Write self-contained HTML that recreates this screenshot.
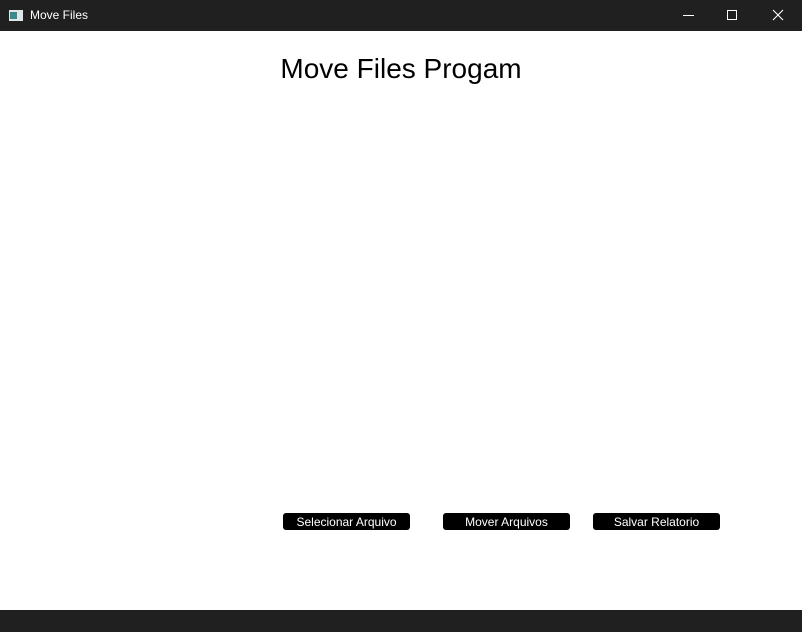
<!DOCTYPE html>
<html><head><style>
html,body{margin:0;padding:0;width:802px;height:632px;overflow:hidden;background:#fff;font-family:"Liberation Sans",sans-serif;}
.tb{position:absolute;left:0;top:0;width:802px;height:31px;background:#202020;}
.tb .t{position:absolute;left:30px;top:8px;color:#fff;font-size:12px;}
.ic{position:absolute;left:9px;top:10px;width:14px;height:11px;background:#dfe6e8;}
.ic:before{content:"";position:absolute;left:1px;top:2px;width:7px;height:7px;background:#3a8a8a;}
.bot{position:absolute;left:0;top:610px;width:802px;height:22px;background:#202020;}
h1{position:absolute;left:0;width:802px;top:53px;margin:0;text-align:center;font-weight:normal;font-size:28px;color:#000;}
.b{position:absolute;top:513px;width:127px;height:17px;background:#000;border-radius:3px;color:#fff;font-size:12px;text-align:center;line-height:18px;}
</style></head><body>
<div class="tb"><div class="ic"></div><div class="t">Move Files</div>
<svg style="position:absolute;left:660px;top:0" width="142" height="31">
<line x1="23" y1="15.5" x2="34" y2="15.5" stroke="#fff" stroke-width="1"/>
<rect x="67.5" y="10.5" width="9" height="9" fill="none" stroke="#fff" stroke-width="1"/>
<path d="M113 10 L123 20 M123 10 L113 20" stroke="#fff" stroke-width="1.1"/>
</svg></div>
<h1>Move Files Progam</h1>
<div class="b" style="left:283px">Selecionar Arquivo</div>
<div class="b" style="left:443px">Mover Arquivos</div>
<div class="b" style="left:593px">Salvar Relatorio</div>
<div class="bot"></div>
</body></html>
